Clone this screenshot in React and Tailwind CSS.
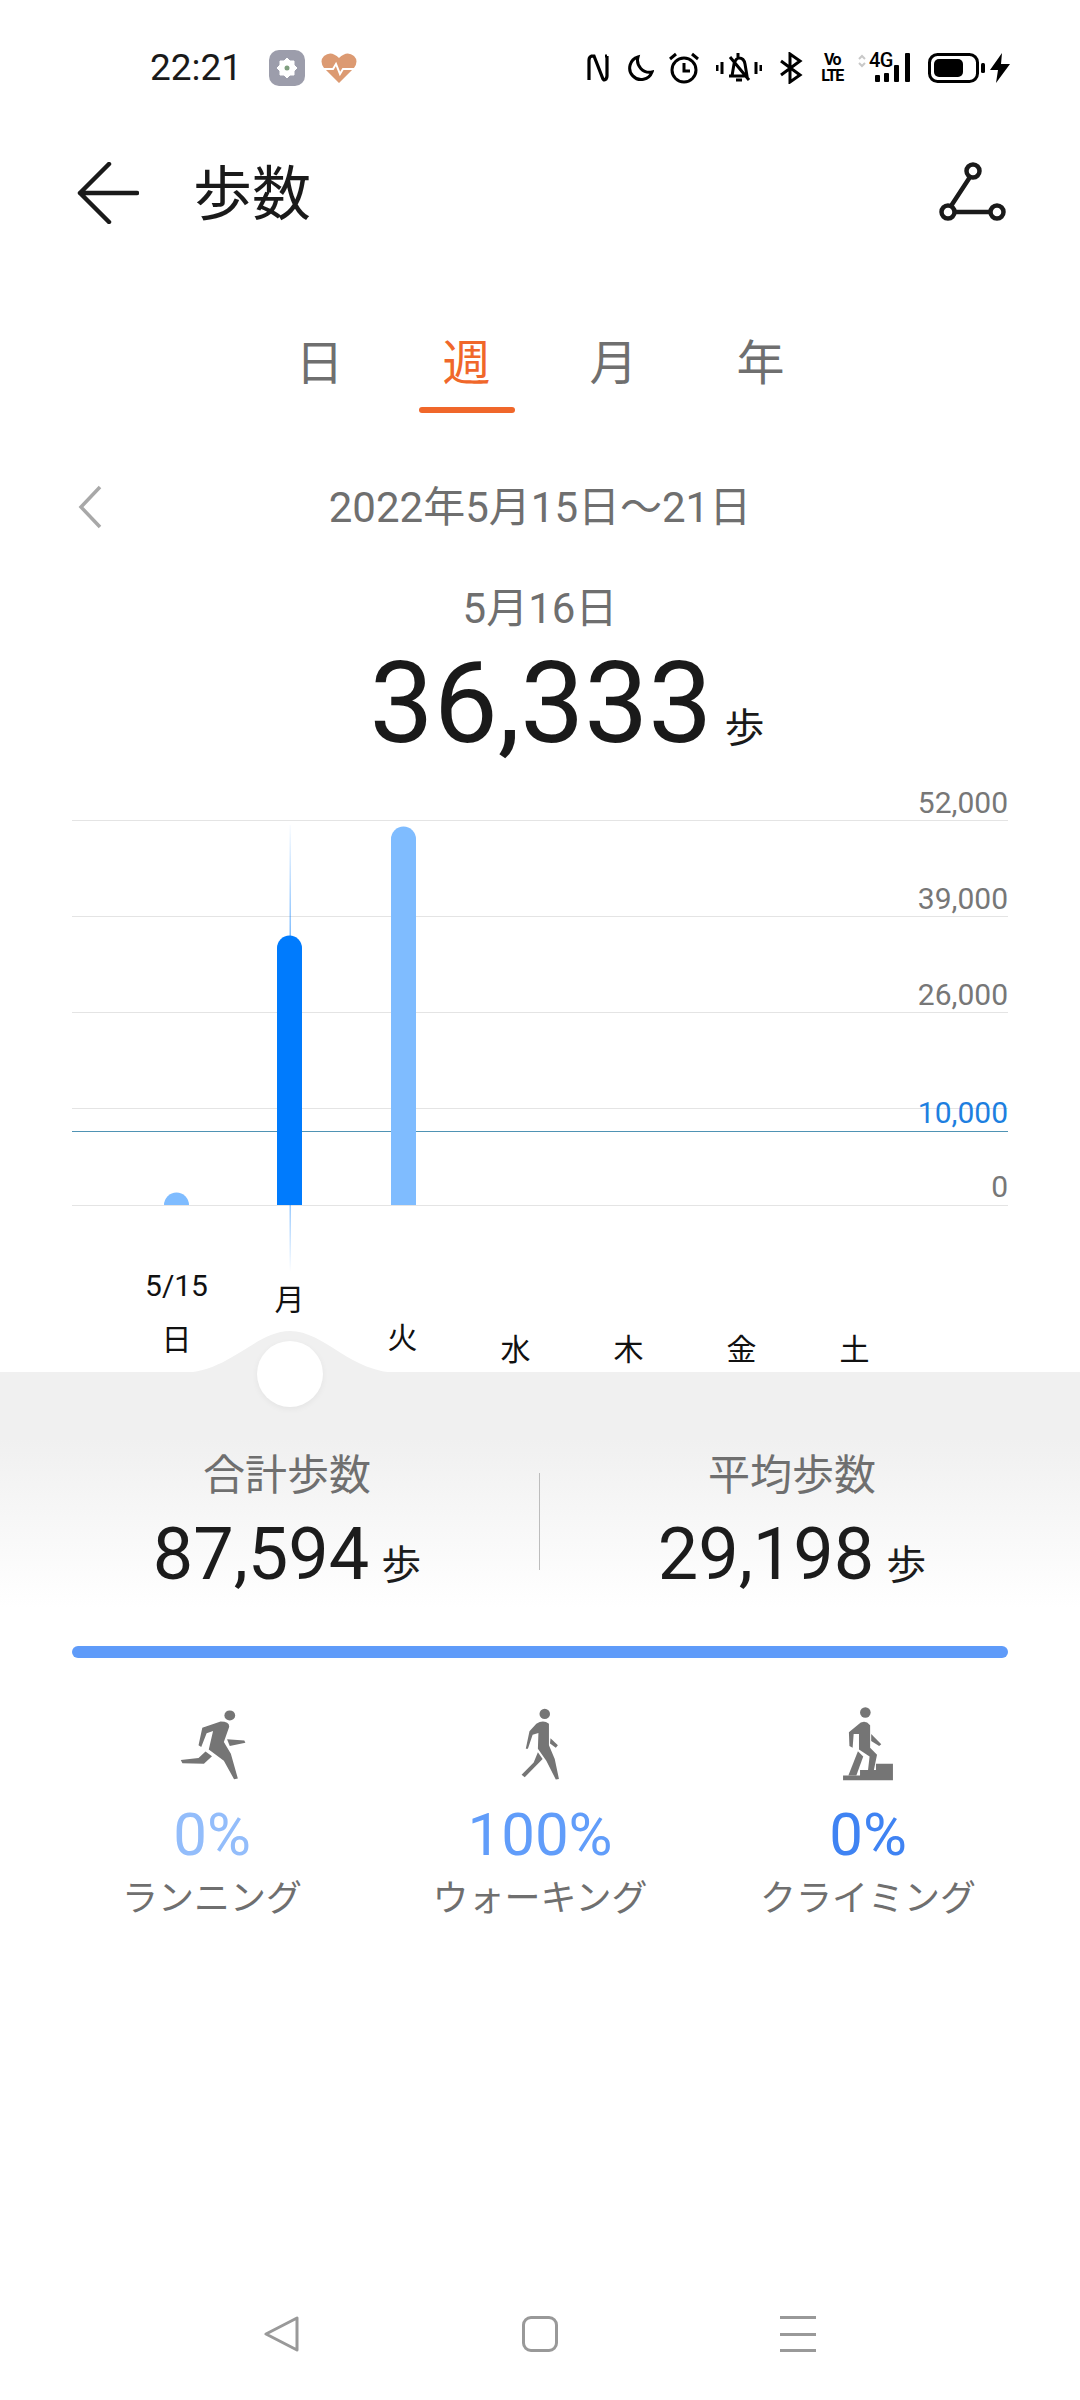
import React from "react";

const days = [
  { label: "日", date: "5/15", cls: "mb-[14px]" },
  { label: "月", cls: "mb-[54px]" },
  { label: "火", cls: "mb-[16px]" },
  { label: "水", cls: "mb-[4px]" },
  { label: "木", cls: "mb-[4px]" },
  { label: "金", cls: "mb-[4px]" },
  { label: "土", cls: "mb-[4px]" },
];

const axis = [
  { text: "52,000", cls: "top-[5px] text-[#777777]" },
  { text: "39,000", cls: "top-[101px] text-[#777777]" },
  { text: "26,000", cls: "top-[197px] text-[#777777]" },
  { text: "10,000", cls: "top-[315px] text-[#1e7fe0]" },
  { text: "0", cls: "top-[389px] text-[#777777]" },
];

function StatusIcons() {
  return (
    <div className="flex items-center text-black">
      <svg width="22" height="30" viewBox="0 0 22 30" fill="none" stroke="black" strokeWidth="3.2">
        <path d="M2 27 V7 Q2 3 6 3 H7 L16 26 Q16.500 27 18 27 M20 3 V23 Q20 27 16 27 M4 3 H6 M18 3 H20" />
      </svg>
      <svg width="28" height="28" viewBox="0 0 28 28" fill="none" stroke="black" strokeWidth="3" className="ml-[17px]">
        <path d="M12 3 A11.500 11.500 0 1 0 26 18 A12 12 0 0 1 12 3Z" />
      </svg>
      <svg width="32" height="32" viewBox="0 0 32 32" fill="none" stroke="black" strokeWidth="3" className="ml-[14px]">
        <circle cx="16" cy="18" r="12" />
        <path d="M16 11 V19 H22 M2 7 L8 2 M30 7 L24 2" />
      </svg>
      <svg width="46" height="32" viewBox="0 0 46 32" fill="none" stroke="black" strokeWidth="3" className="ml-[16px]">
        <path d="M16 24 L18 12 Q20 6 23 6 Q28 6 29 12 L31 24 H13 M22 1 V5 M20 28 H26 M14 5 L33 28" />
        <path d="M1 13 V19 M6 10 V22 M40 10 V22 M45 13 V19" />
      </svg>
      <svg width="24" height="32" viewBox="0 0 24 32" fill="none" stroke="black" strokeWidth="3" className="ml-[17px]">
        <path d="M2 9 L21 23 L11 30 V2 L21 9 L2 23" />
      </svg>
      <div className="ml-[18px] flex h-[32px] w-[22px] flex-col items-center justify-center text-[16px] leading-[16px] font-bold tracking-[-1.5px]">
        <span>Vo</span>
        <span>LTE</span>
      </div>
      <div className="relative ml-[15px] h-[32px] w-[60px]">
        <svg width="8" height="14" viewBox="0 0 8 14" fill="none" stroke="#c8c8c8" strokeWidth="2" className="absolute left-0 top-[2px]">
          <path d="M1 5 L4 2 L7 5 M1 9 L4 12 L7 9" />
        </svg>
        <span className="absolute left-[11px] top-[-3px] text-[20px] leading-[22px] font-medium tracking-[-0.5px]">4G</span>
        <svg width="38" height="30" viewBox="0 0 38 30" fill="black" className="absolute left-[17px] top-[1px]">
          <rect x="0" y="22" width="5" height="7" rx="1" />
          <rect x="9" y="20" width="5" height="9" rx="1" />
          <rect x="19" y="12" width="5" height="17" rx="1" />
          <rect x="30" y="0" width="5" height="29" rx="1" />
        </svg>
      </div>
      <svg width="57" height="30" viewBox="0 0 57 30" className="ml-[10px]">
        <rect x="1.500" y="1.500" width="48" height="27" rx="8" fill="none" stroke="black" strokeWidth="3" />
        <rect x="6" y="6" width="29" height="18" rx="5" fill="black" />
        <rect x="53" y="10" width="4" height="10" rx="1.500" fill="black" />
      </svg>
      <svg width="20" height="30" viewBox="0 0 20 30" fill="black" className="ml-[5px]">
        <path d="M12 0 L0 17 H8 L6 30 L20 11 H11Z" />
      </svg>
    </div>
  );
}

function RunIcon() {
  return (
    <svg width="70" height="73" viewBox="105 50 130 215" preserveAspectRatio="none" fill="#757575">
      <ellipse cx="203" cy="72" rx="10" ry="15" />
      <path d="M152 108 L186 90 Q202 90 202 105 L192 150 L205 185 L218 258 L211 260 L192 205 L164 172 L172 118 L160 124 L150 165 L145 160Z" />
      <path d="M158 178 L170 192 L155 214 L115 213 L112 203 L145 197Z" />
      <path d="M198 142 L230 146 L232 152 L203 162Z" />
    </svg>
  );
}

function WalkIcon() {
  return (
    <svg width="40" height="73" viewBox="746 58 76 210" preserveAspectRatio="none" fill="#757575">
      <ellipse cx="793" cy="75" rx="10" ry="15" />
      <path d="M777 103 Q790 90 801 103 L801 165 L812 205 L820 262 L814 264 L796 210 L780 175 L781 130 L770 135 L761 175 L757 175 L764 125Z" />
      <path d="M780 185 L789 205 L755 257 L749 250 L772 215Z" />
      <path d="M804 145 L818 165 L814 172 L803 160Z" />
    </svg>
  );
}

function ClimbIcon() {
  return (
    <svg width="52" height="74" viewBox="1348 52 98 214" preserveAspectRatio="none" fill="#757575">
      <ellipse cx="1392" cy="68" rx="10" ry="15" />
      <path d="M1377 105 Q1390 85 1401 105 L1401 170 L1414 190 L1408 235 L1397 235 L1400 195 L1380 175 L1380 130 L1370 130 L1368 170 L1362 165 L1361 125Z" />
      <path d="M1378 180 L1388 195 L1375 250 L1360 250Z" />
      <path d="M1403 130 L1422 160 L1418 165 L1403 150Z" />
      <path d="M1350 250 H1382 V234 H1412 V216 H1444 V264 H1350Z" />
    </svg>
  );
}

const activities = [
  { icon: <RunIcon />, value: "0%", name: "ランニング", color: "text-[#93bdfb]" },
  { icon: <WalkIcon />, value: "100%", name: "ウォーキング", color: "text-[#619dfa]" },
  { icon: <ClimbIcon />, value: "0%", name: "クライミング", color: "text-[#3f83f3]" },
];

function Stat({ title, value }) {
  return (
    <div className="flex w-[504px] flex-col items-center">
      <div className="h-[56px] text-[42px] leading-[56px] text-[#6f6f6f]">{title}</div>
      <div className="mt-[11px] flex h-[80px] items-baseline leading-[80px] text-[#1c1c1c]">
        <span className="text-[72px]">{value}</span>
        <span className="ml-[12px] text-[40px]">歩</span>
      </div>
    </div>
  );
}

export default function App() {
  return (
    <div className="flex h-[2400px] w-[1080px] flex-col overflow-hidden bg-white font-['Roboto','Noto_Sans_CJK_JP',sans-serif]">
      {/* status bar */}
      <div className="flex h-[136px] items-center justify-between pl-[150px] pr-[70px]">
        <div className="flex items-center">
          <span className="text-[37px] text-[#1a1a1a]">22:21</span>
          <div className="ml-[27px] flex h-[36px] w-[36px] items-center justify-center rounded-[10px] bg-[#9c9dab]">
            <svg width="22" height="22" viewBox="0 0 22 22">
              <path d="M11 1 L14 4 L18 4 L18 8 L21 11 L18 14 L18 18 L14 18 L11 21 L8 18 L4 18 L4 14 L1 11 L4 8 L4 4 L8 4Z" fill="white" stroke="white" strokeLinejoin="round" strokeWidth="1" />
              <circle cx="11" cy="11" r="2.500" fill="#7f9f7f" />
            </svg>
          </div>
          <svg width="36" height="32" viewBox="0 0 36 32" className="ml-[16px]">
            <path d="M18 31 L3 16 Q-2 9 3 4 Q10 -2 18 6 Q26 -2 33 4 Q38 9 33 16Z" fill="#dc9a72" />
            <path d="M2 17 H12 L15 12 L19 22 L22 17 H34" fill="none" stroke="white" strokeWidth="2" />
          </svg>
        </div>
        <StatusIcons />
      </div>

      {/* header */}
      <div className="flex h-[114px] items-center justify-between pl-[77px] pr-[73px]">
        <div className="flex items-center">
          <svg width="62" height="62" viewBox="0 0 62 62" fill="none" stroke="#1a1a1a" strokeWidth="4.500" strokeLinecap="round" strokeLinejoin="round">
            <path d="M60 31 H3 M32 2 L3 31 L32 60" />
          </svg>
          <span className="ml-[54px] mt-[4px] text-[59px] leading-[70px] text-[#1a1a1a]">歩数</span>
        </div>
        <svg width="68" height="62" viewBox="0 0 68 62" fill="none" stroke="#1a1a1a" strokeWidth="4.500">
          <circle cx="34" cy="9" r="6.500" />
          <circle cx="9" cy="50" r="6.500" />
          <circle cx="58" cy="50" r="6.500" />
          <path d="M31 15 L12 44 M16 50 H51" />
        </svg>
      </div>

      {/* tabs */}
      <div className="grid h-[163px] w-[834px] grid-cols-4 pl-[246px] pt-[82px] text-[48px] leading-[64px] text-[#6f6f6f]">
        <div className="text-center">日</div>
        <div className="flex flex-col items-center text-[#f0672a]">
          <span>週</span>
          <div className="mt-[11px] h-[6px] w-[96px] rounded-full bg-[#f0672a]" />
        </div>
        <div className="text-center">月</div>
        <div className="text-center">年</div>
      </div>

      {/* date range */}
      <div className="relative mt-[54px] flex h-[80px] items-center justify-center text-[42px] text-[#6f6f6f]">
        <svg width="26" height="44" viewBox="0 0 26 44" fill="none" stroke="#a8a8a8" strokeWidth="3.500" className="absolute left-[77px] top-[18px]">
          <path d="M23 2 L4 22 L23 42" />
        </svg>
        2022年5月15日～21日
      </div>

      <div className="mt-[37px] h-[50px] text-center text-[42px] leading-[50px] text-[#6f6f6f]">5月16日</div>
      <div className="mt-[14px] flex h-[110px] items-baseline justify-center pl-[54px] leading-[110px] text-[#1a1a1a]">
        <span className="text-[114px]">36,333</span>
        <span className="ml-[12px] text-[40px]">歩</span>
      </div>

      {/* chart */}
      <div className="relative mt-[22px] flex h-[592px] flex-col justify-end">
        <svg width="1080" height="500" viewBox="0 780 1080 500" className="absolute left-0 top-0">
          <defs>
            <linearGradient id="cursorLine" x1="0" y1="825" x2="0" y2="1272" gradientUnits="userSpaceOnUse">
              <stop offset="0" stopColor="#007bfd" stopOpacity="0.02" />
              <stop offset="0.25" stopColor="#007bfd" stopOpacity="0.5" />
              <stop offset="0.85" stopColor="#007bfd" stopOpacity="0.4" />
              <stop offset="1" stopColor="#007bfd" stopOpacity="0" />
            </linearGradient>
          </defs>
          <path d="M72 820.500 H1008 M72 916.500 H1008 M72 1012.500 H1008 M72 1108.500 H1008 M72 1205.500 H1008" stroke="#e4e4e4" strokeWidth="1" />
          <path d="M72 1131.500 H1008" stroke="#4f93b4" strokeWidth="1" />
          <rect x="289.500" y="825" width="1.500" height="447" fill="url(#cursorLine)" />
          <path d="M164 1205 A12.500 12.500 0 0 1 189 1205Z" fill="#7fbcff" />
          <path d="M277 1205 V948 A12.500 12.500 0 0 1 302 948 V1205Z" fill="#007bfd" />
          <path d="M391 1205 V839 A12.500 12.500 0 0 1 416 839 V1205Z" fill="#7fbcff" />
        </svg>
        {axis.map((a) => (
          <div key={a.text} className={`absolute right-[72px] h-[36px] text-[30px] leading-[36px] ${a.cls}`}>
            {a.text}
          </div>
        ))}
        <div className="relative grid w-[911px] grid-cols-7 items-end pl-[120px] text-[30px] leading-[36px] text-[#111111]">
          {days.map((d) => (
            <div key={d.label} className={`flex flex-col items-center ${d.cls}`}>
              {d.date && <span className="mb-[18px]">{d.date}</span>}
              <span>{d.label}</span>
            </div>
          ))}
        </div>
      </div>

      {/* summary panel */}
      <div className="relative h-[268px] bg-gradient-to-b from-[#f0f0f0] from-[25%] to-white to-[88%]">
        <svg width="220" height="42" viewBox="0 0 220 42" className="absolute left-[180px] top-[-41px]">
          <path d="M0 42 C50 42 75 0 110 0 C145 0 170 42 220 42Z" fill="#f0f0f0" />
        </svg>
        <div className="absolute left-[257px] top-[-31px] h-[66px] w-[66px] rounded-full bg-white shadow-[0_2px_6px_rgba(0,0,0,0.05)]" />
        <div className="flex items-start pl-[35px] pt-[76px]">
          <Stat title="合計歩数" value="87,594" />
          <div className="mt-[25px] h-[97px] w-px bg-[#bdbdbd]" />
          <Stat title="平均歩数" value="29,198" />
        </div>
      </div>

      <div className="mx-[72px] mt-[6px] h-[12px] rounded-full bg-[#5f9bf9]" />

      {/* activity breakdown */}
      <div className="mt-[48px] grid grid-cols-3 px-[48px]">
        {activities.map((a) => (
          <div key={a.name} className="flex flex-col items-center">
            <div className="flex h-[76px] items-center">{a.icon}</div>
            <div className={`mt-[21px] h-[64px] text-[60px] leading-[64px] ${a.color}`}>{a.value}</div>
            <div className="mt-[7px] h-[50px] text-[36px] leading-[50px] text-[#6f6f6f]">{a.name}</div>
          </div>
        ))}
      </div>

      {/* nav bar */}
      <div className="mt-auto flex h-[132px] items-center justify-center gap-[222px]">
        <svg width="36" height="36" viewBox="0 0 36 36" fill="none" stroke="#999999" strokeWidth="3" strokeLinejoin="round">
          <path d="M2 18 L33 2 V34Z" />
        </svg>
        <div className="h-[36px] w-[36px] rounded-[9px] border-[3px] border-[#999999]" />
        <div className="flex h-[36px] w-[36px] flex-col justify-between">
          <div className="h-[3px] bg-[#999999]" />
          <div className="h-[3px] bg-[#999999]" />
          <div className="h-[3px] bg-[#999999]" />
        </div>
      </div>
    </div>
  );
}
